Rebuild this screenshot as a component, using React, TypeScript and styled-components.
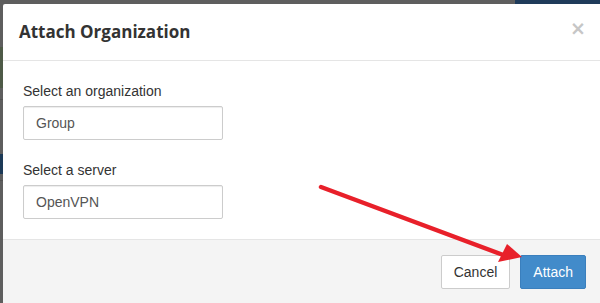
import React from "react";
import styled, { createGlobalStyle } from "styled-components";

const GlobalStyle = createGlobalStyle`
  html, body {
    margin: 0;
    padding: 0;
    overflow: hidden;
    background: #5e5e5e;
  }
  * { box-sizing: border-box; }
`;

const Page = styled.div`
  position: relative;
  width: 600px;
  height: 303px;
  overflow: hidden;
  padding: 4px 0 0 3px;
  background-color: #5e5e5e;
  background-image:
    linear-gradient(to right, transparent 515px, #1f3b5a 515px),
    linear-gradient(#4e5a47, #4e5a47),
    linear-gradient(#1c3a57, #1c3a57),
    linear-gradient(#525252, #525252),
    linear-gradient(#525252, #525252);
  background-size: 600px 4px, 3px 41px, 3px 20px, 3px 1px, 3px 1px;
  background-position: 0 0, 0 47px, 0 154px, 0 99px, 0 180px;
  background-repeat: no-repeat;
  font-family: "Liberation Sans", Arial, sans-serif;
`;

const Modal = styled.div`
  width: 598px;
  background: #ffffff;
  border-radius: 2px 0 0 0;
  display: flex;
  flex-direction: column;
`;

const Header = styled.div`
  display: flex;
  align-items: flex-start;
  justify-content: space-between;
  padding: 16px 15px 16px 16px;
  border-bottom: 1px solid #e5e5e5;
`;

const Title = styled.h4`
  margin: 0;
  font-family: "Open Sans", "DejaVu Sans", sans-serif;
  font-weight: 700;
  font-size: 17px;
  line-height: 24px;
  color: #333333;
`;

const Close = styled.button`
  border: 0;
  background: transparent;
  padding: 0;
  margin-top: -2px;
  height: 20px;
  font-family: "DejaVu Sans", sans-serif;
  font-size: 19px;
  font-weight: 700;
  line-height: 20px;
  color: #c6c6c6;
  cursor: pointer;
`;

const Body = styled.div`
  padding: 20px 20px;
  display: flex;
  flex-direction: column;
  gap: 20px;
`;

const Group = styled.div`
  display: flex;
  flex-direction: column;
  align-items: flex-start;
`;

const Label = styled.label`
  font-size: 14px;
  line-height: 20px;
  color: #333333;
  margin-bottom: 5px;
`;

const Select = styled.div`
  width: 200px;
  height: 34px;
  padding: 0 12px;
  border: 1px solid #cccccc;
  border-radius: 2px;
  box-shadow: inset 0 1px 1px rgba(0, 0, 0, 0.075);
  display: flex;
  align-items: center;
  font-size: 14px;
  color: #555555;
`;

const Footer = styled.div`
  display: flex;
  justify-content: flex-end;
  gap: 10px;
  padding: 15px 15px 15px;
  background: #f4f4f4;
  border-top: 1px solid #e5e5e5;
`;

const Button = styled.button<{ $primary?: boolean }>`
  height: 34px;
  padding: 0 12px;
  font-family: "Liberation Sans", Arial, sans-serif;
  font-size: 14px;
  border-radius: 2px;
  cursor: pointer;
  border: 1px solid ${(p) => (p.$primary ? "#3a7fbd" : "#cccccc")};
  background: ${(p) => (p.$primary ? "#428bca" : "#ffffff")};
  color: ${(p) => (p.$primary ? "#ffffff" : "#333333")};
`;

const ArrowLayer = styled.svg`
  position: absolute;
  left: 0;
  top: 0;
  pointer-events: none;
`;

export default function App() {
  return (
    <>
      <GlobalStyle />
      <Page>
        <Modal>
          <Header>
            <Title>Attach Organization</Title>
            <Close aria-label="Close">×</Close>
          </Header>
          <Body>
            <Group>
              <Label>Select an organization</Label>
              <Select>Group</Select>
            </Group>
            <Group>
              <Label>Select a server</Label>
              <Select>OpenVPN</Select>
            </Group>
          </Body>
          <Footer>
            <Button>Cancel</Button>
            <Button $primary>Attach</Button>
          </Footer>
        </Modal>
        <ArrowLayer width="600" height="303" viewBox="0 0 600 303">
          <line
            x1="321"
            y1="187"
            x2="506"
            y2="256"
            stroke="#e8202a"
            strokeWidth="4.5"
            strokeLinecap="round"
          />
          <polygon points="522,257 507,244 498,262" fill="#e8202a" />
        </ArrowLayer>
      </Page>
    </>
  );
}
